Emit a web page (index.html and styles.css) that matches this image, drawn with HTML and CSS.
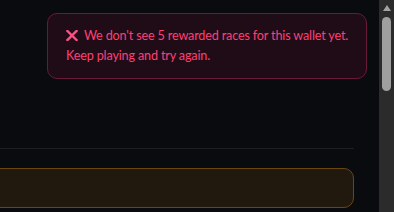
FILE: index.html
```html
<!DOCTYPE html>
<html lang="en">
<head>
    <meta charset="UTF-8">
    <meta name="viewport" content="width=device-width, initial-scale=1.0">
    <title>Rewards</title>
    <link rel="stylesheet" href="styles.css">
</head>
<body>
    <div class="app">
        <main class="page">
            <div class="content">
                <div class="divider"></div>
                <div class="notice"></div>
            </div>

            <div class="toast">
                <svg class="toast-icon" width="12" height="11" viewBox="0 0 12 11">
                    <path d="M1.5 1 L10.5 10 M10.5 1 L1.5 10" stroke="#ff4f86" stroke-width="2.4" stroke-linecap="square"/>
                </svg>
                We don't see 5 rewarded races for this wallet yet. Keep playing and try again.
            </div>
        </main>

        <div class="scrollbar">
            <div class="scroll-arrow"></div>
            <div class="scroll-thumb"></div>
        </div>
    </div>
</body>
</html>
```

FILE: styles.css
```css
body {
    margin: 0;
    background-color: #0a0b0f;
    font-family: 'Lato', 'Noto Sans', sans-serif;
    color: #e6e6ea;
}

.app {
    display: flex;
    height: 100vh;
    overflow: hidden;
}

.page {
    flex: 1;
    position: relative;
    overflow: hidden;
}

.content {
    margin: 0 25px 0 -20px;
    padding-top: 148px;
}

.divider {
    height: 1px;
    background-color: #1e1f25;
}

.notice {
    margin-top: 19px;
    height: 38px;
    border: 1px solid #6a4710;
    border-radius: 10px;
    background-color: #21190d;
}

.toast {
    position: absolute;
    top: 13px;
    right: 12px;
    width: 320px;
    box-sizing: border-box;
    padding: 12px 10px 12px 18px;
    border: 1px solid #6a1a38;
    border-radius: 10px;
    background-color: #1f0c16;
    color: #ff3f78;
    font-size: 12.6px;
    line-height: 20px;
    letter-spacing: -0.15px;
}

.toast-icon {
    margin-right: 3px;
    vertical-align: -1px;
}

/* fake classic scrollbar */
.scrollbar {
    width: 15px;
    background-color: #2b2b2b;
    display: flex;
    flex-direction: column;
    align-items: center;
}

.scroll-arrow {
    margin-top: 5px;
    width: 0;
    height: 0;
    border-left: 4px solid transparent;
    border-right: 4px solid transparent;
    border-bottom: 6px solid #a3a3a3;
}

.scroll-thumb {
    margin-top: 6px;
    width: 9px;
    height: 74px;
    border-radius: 5px;
    background-color: #9f9f9f;
}
```
